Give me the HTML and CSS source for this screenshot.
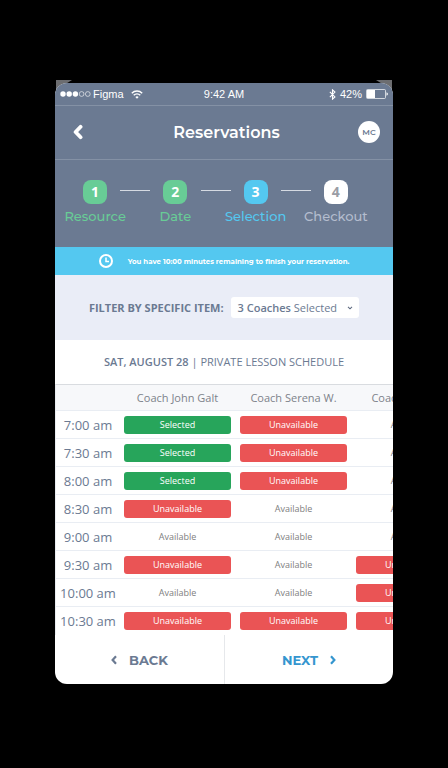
FILE: index.html
```html
<!DOCTYPE html>
<html lang="en">
<head>
<meta charset="utf-8">
<meta name="viewport" content="width=device-width, initial-scale=1">
<title>Reservations</title>
<link rel="stylesheet" href="styles.css">
</head>
<body>
<div class="frame">
<main class="phone">
  <div class="status-bar">
    <div class="carrier">
      <svg class="signal" viewBox="0 0 31 6" aria-hidden="true"><g fill="#fff"><circle cx="3" cy="3" r="2.7"/><circle cx="9.2" cy="3" r="2.7"/><circle cx="15.4" cy="3" r="2.7"/></g><g fill="none" stroke="#fff" stroke-width=".6"><circle cx="21.6" cy="3" r="2.4"/><circle cx="27.8" cy="3" r="2.4"/></g></svg>
      <span>Figma</span>
      <svg class="wifi" viewBox="0 0 12 9" aria-hidden="true"><g fill="none" stroke="#fff" stroke-width="1.4"><path d="M.8 3.2a7.4 7.4 0 0 1 10.4 0"/><path d="M2.7 5.3a4.7 4.7 0 0 1 6.6 0"/></g><path d="M6 8.8 4.3 7a2.4 2.4 0 0 1 3.4 0z" fill="#fff"/></svg>
    </div>
    <span>9:42 AM</span>
    <div class="power">
      <svg class="bluetooth" viewBox="0 0 6 10" aria-hidden="true"><path d="M.6 2.7 5.2 7.2 3 9.2V.8l2.2 2L.6 7.3" fill="none" stroke="#fff" stroke-width="1"/></svg>
      <span>42%</span>
      <svg class="battery" viewBox="0 0 22 10" aria-hidden="true"><rect x=".5" y=".5" width="19" height="9" rx="1" fill="none" stroke="#fff" stroke-width=".7"/><rect x="1" y="1" width="8" height="8" fill="#fff"/><path d="M20.5 3.2q1.4.5 1.4 1.8t-1.4 1.8z" fill="#fff"/></svg>
    </div>
  </div>

  <header class="nav">
    <button class="nav-back" type="button" aria-label="Back"><svg viewBox="0 0 10 16" aria-hidden="true"><path d="M7.6 2.8 2.6 8l5 5.2" fill="none" stroke="#fff" stroke-width="3.8" stroke-linecap="round" stroke-linejoin="round"/></svg></button>
    <h1>Reservations</h1>
    <button class="avatar" type="button">MC</button>
  </header>

  <ol class="steps">
    <li class="step done"><span class="badge">1</span><span class="label">Resource</span></li>
    <li class="step done"><span class="badge">2</span><span class="label">Date</span></li>
    <li class="step current"><span class="badge">3</span><span class="label">Selection</span></li>
    <li class="step"><span class="badge">4</span><span class="label">Checkout</span></li>
  </ol>

  <p class="timer">
    <svg viewBox="0 0 14 14" aria-hidden="true"><g fill="none" stroke="#fff"><circle cx="7" cy="7" r="6" stroke-width="2"/><path d="M7 3.4V7.6h3" stroke-width="1.5"/></g></svg>
    <span>You have 10:00 minutes remaining to finish your reservation.</span>
  </p>

  <div class="filter">
    <span class="filter-label" id="filter-label">FILTER BY SPECIFIC ITEM:</span>
    <button class="picker" type="button" aria-haspopup="listbox" aria-labelledby="filter-label picker-value">
      <span id="picker-value"><b>3 Coaches</b> Selected</span>
      <svg viewBox="0 0 6 4" aria-hidden="true"><path d="M1 .8 3 2.8 5 .8" fill="none" stroke="#5f6b80" stroke-width="1.1"/></svg>
    </button>
  </div>

  <h2 class="schedule-title"><b>SAT, AUGUST 28</b> | PRIVATE LESSON SCHEDULE</h2>

  <div class="schedule">
    <table>
      <thead>
        <tr><td class="time"></td><th scope="col">Coach John Galt</th><th scope="col">Coach Serena W.</th><th scope="col">Coach Amy Po.</th></tr>
      </thead>
      <tbody>
        <tr><th class="time" scope="row">7:00 am</th><td><button class="slot selected" type="button">Selected</button></td><td><button class="slot taken" type="button">Unavailable</button></td><td><button class="slot" type="button">Available</button></td></tr>
        <tr><th class="time" scope="row">7:30 am</th><td><button class="slot selected" type="button">Selected</button></td><td><button class="slot taken" type="button">Unavailable</button></td><td><button class="slot" type="button">Available</button></td></tr>
        <tr><th class="time" scope="row">8:00 am</th><td><button class="slot selected" type="button">Selected</button></td><td><button class="slot taken" type="button">Unavailable</button></td><td><button class="slot" type="button">Available</button></td></tr>
        <tr><th class="time" scope="row">8:30 am</th><td><button class="slot taken" type="button">Unavailable</button></td><td><button class="slot" type="button">Available</button></td><td><button class="slot" type="button">Available</button></td></tr>
        <tr><th class="time" scope="row">9:00 am</th><td><button class="slot" type="button">Available</button></td><td><button class="slot" type="button">Available</button></td><td><button class="slot" type="button">Available</button></td></tr>
        <tr><th class="time" scope="row">9:30 am</th><td><button class="slot taken" type="button">Unavailable</button></td><td><button class="slot" type="button">Available</button></td><td><button class="slot taken" type="button">Unavailable</button></td></tr>
        <tr><th class="time" scope="row">10:00 am</th><td><button class="slot" type="button">Available</button></td><td><button class="slot" type="button">Available</button></td><td><button class="slot taken" type="button">Unavailable</button></td></tr>
        <tr><th class="time" scope="row">10:30 am</th><td><button class="slot taken" type="button">Unavailable</button></td><td><button class="slot taken" type="button">Unavailable</button></td><td><button class="slot taken" type="button">Unavailable</button></td></tr>
      </tbody>
    </table>
  </div>

  <footer class="pager">
    <button class="back" type="button"><svg viewBox="0 0 6 10" aria-hidden="true"><path d="M5 1.2 1.6 5 5 8.8" fill="none" stroke="currentColor" stroke-width="2.2"/></svg>BACK</button>
    <button class="next" type="button">NEXT<svg viewBox="0 0 6 10" aria-hidden="true"><path d="M1 1.2 4.4 5 1 8.8" fill="none" stroke="currentColor" stroke-width="2.2"/></svg></button>
  </footer>
</main>
</div>
</body>
</html>
```
FILE: styles.css
```css
* { box-sizing: border-box; }

body {
  margin: 0;
  padding: 83px 55px;
  background: #000;
  color: #6b7a92;
  font-family: "Open Sans", "Noto Sans", sans-serif;
  font-size: 12px;
}

b { font-weight: 600; }

button {
  margin: 0;
  padding: 0;
  border: 0;
  background: none;
  color: inherit;
  font: inherit;
  cursor: pointer;
}

svg { display: block; flex: none; }

/* Grey corner pieces of the device frame, behind the screen */
.frame { position: relative; z-index: 0; }

.frame::before, .frame::after {
  content: "";
  position: absolute;
  z-index: -1;
  top: -3px;
  width: 16px;
  height: 10px;
  background: #6c6d70;
}

.frame::before { left: 1px; clip-path: polygon(0 0, 100% 0, 0 100%); }
.frame::after { right: 1px; clip-path: polygon(0 0, 100% 0, 100% 100%); }

.phone {
  overflow: hidden;
  border-radius: 12px;
  background: #fff;
}

.status-bar {
  display: grid;
  grid-template-columns: 1fr auto 1fr;
  align-items: center;
  height: 23px;
  padding: 0 5px;
  border-bottom: 1px solid #8491a5;
  background: #6b7a92;
  color: #fff;
  font-family: "Liberation Sans", Arial, sans-serif;
  font-size: 11px;
}

.carrier, .power { display: flex; align-items: center; }
.power { justify-content: flex-end; gap: 4px; }
.signal { width: 31px; height: 6px; margin-right: 2px; }
.wifi { width: 12px; height: 9px; margin-left: 7px; }
.bluetooth { width: 7px; height: 11px; }
.battery { width: 22px; height: 10px; }

.nav {
  display: grid;
  grid-template-columns: 1fr auto 1fr;
  align-items: center;
  height: 54px;
  padding: 0 13px 1px 18px;
  border-bottom: 1px solid #8491a5;
  background: #6b7a92;
  color: #fff;
  font-family: Montserrat, Inter, sans-serif;
}

.nav h1 { margin: 0; font-size: 16px; font-weight: 600; }
.nav-back { justify-self: start; }
.nav-back svg { width: 10px; height: 16px; }

.avatar {
  justify-self: end;
  width: 22px;
  height: 22px;
  border-radius: 50%;
  background: #fff;
  color: #6b7a92;
  font-size: 8px;
  font-weight: 600;
}

.steps {
  display: grid;
  grid-template-columns: repeat(4, 1fr);
  margin: 0;
  padding: 20px 17px 21px 0;
  background: #6b7a92;
  list-style: none;
}

.step {
  display: grid;
  grid-template-columns: 1fr 24px 1fr;
  row-gap: 2px;
  color: #b4bdce;
}

.step::before, .step::after {
  content: "";
  width: 15px;
  height: 1px;
  margin-top: 10px;
  background: #d5dae2;
}

.step::after { grid-column: 3; grid-row: 1; justify-self: end; }
.step:first-child::before, .step:last-child::after { visibility: hidden; }

.badge {
  height: 24px;
  border-radius: 8px;
  background: #fff;
  color: #9a9da5;
  font-size: 14px;
  font-weight: 700;
  line-height: 24px;
  text-align: center;
}

.label {
  grid-column: 1 / -1;
  grid-row: 2;
  font-family: Montserrat, Inter, sans-serif;
  font-size: 13px;
  font-weight: 500;
  line-height: 20px;
  text-align: center;
}

.done { color: #68cc96; }
.done .badge { background: #68cc96; color: #fff; }
.current { color: #54c8f0; }
.current .badge { background: #54c8f0; color: #fff; }

.timer {
  display: flex;
  align-items: center;
  justify-content: center;
  gap: 15px;
  height: 28px;
  margin: 0;
  background: #54c8f0;
  color: #fff;
  font-family: Montserrat, Inter, sans-serif;
  font-size: 7px;
  font-weight: 700;
}

.timer svg { width: 14px; height: 14px; }

.filter {
  display: flex;
  align-items: center;
  justify-content: center;
  gap: 7px;
  height: 65px;
  background: #eaedf7;
  font-size: 11px;
}

.filter-label { font-weight: 700; }

.picker {
  display: flex;
  align-items: center;
  gap: 10px;
  height: 21px;
  padding: 0 6px 0 7px;
  border-radius: 3px;
  background: #fff;
}

.picker svg { width: 6px; height: 4px; }

.schedule-title {
  margin: 0;
  font-size: 11px;
  font-weight: 400;
  line-height: 44px;
  text-align: center;
}

.schedule {
  overflow-x: auto;
  border-top: 1px solid #d9dce0;
  border-left: 1px solid #e9ecf0;
  scrollbar-width: none;
}

.schedule table {
  width: 412px;
  border-collapse: separate;
  border-spacing: 0;
  table-layout: fixed;
}

.schedule th, .schedule td {
  height: 28px;
  padding: 0 5px 0 4px;
  border-bottom: 1px solid #e9edf3;
  font-weight: 400;
  text-align: center;
  white-space: nowrap;
}

.schedule thead th, .schedule thead td {
  height: 26px;
  background: #f7f8fa;
  color: #7d828a;
  font-size: 11px;
}

.schedule .time { width: 64px; padding: 0; font-size: 13px; }

.slot {
  display: block;
  width: 100%;
  height: 18px;
  border-radius: 3px;
  color: #808080;
  font-size: 9px;
}

.selected { background: #27a55b; color: #fff; }
.taken { background: #ea5455; color: #fff; }

.schedule tbody tr:last-child > * { border-bottom-color: #fff; }

.pager {
  display: grid;
  grid-template-columns: 1fr 1fr;
  height: 49px;
  font-family: Montserrat, Inter, sans-serif;
  font-size: 13px;
  font-weight: 700;
}

.pager button {
  display: flex;
  align-items: center;
  justify-content: center;
  gap: 12px;
}

.pager svg { width: 6px; height: 10px; }
.pager .next { border-left: 1px solid #e6e8eb; color: #3596cf; }
```
